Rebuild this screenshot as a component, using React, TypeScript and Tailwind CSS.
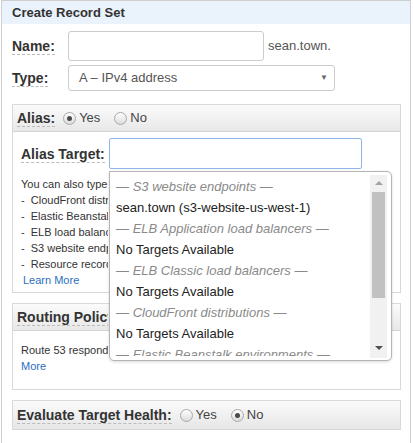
function Radio({ checked }: { checked?: boolean }) {
  return (
    <span className="flex h-[13px] w-[13px] items-center justify-center rounded-full border border-[#a9a9a9] bg-gradient-to-b from-[#ffffff] to-[#dcdcdc]">
      {checked && <span className="h-[5px] w-[5px] rounded-full bg-[#4a4a4a]" />}
    </span>
  );
}

function Label({ children }: { children: React.ReactNode }) {
  return (
    <span className="border-b border-dashed border-[#bbbbbb] text-[14px] font-bold leading-[16px] text-[#333]">
      {children}
    </span>
  );
}

const groups: { head: string; item: string }[] = [
  { head: "S3 website endpoints", item: "sean.town (s3-website-us-west-1)" },
  { head: "ELB Application load balancers", item: "No Targets Available" },
  { head: "ELB Classic load balancers", item: "No Targets Available" },
  { head: "CloudFront distributions", item: "No Targets Available" },
  { head: "Elastic Beanstalk environments", item: "No Targets Available" },
];

export default function App() {
  return (
    <div
      className="relative h-[443px] w-[413px] overflow-hidden bg-white text-[#333]"
      style={{ fontFamily: '"Liberation Sans", Arial, sans-serif' }}
    >
      <div className="ml-[1px] h-[460px] w-[410px] border-x border-t border-[#cfcfcf]">
        <div className="flex h-[23px] items-center bg-[#eaf2fc] pl-[10px] text-[13px] font-bold text-[#333]">
          Create Record Set
        </div>

        <div className="pl-[10px] pt-[7px]">
          <div className="flex h-[30px] items-center">
            <div className="w-[56px]">
              <Label>Name:</Label>
            </div>
            <div className="h-[30px] w-[196px] rounded-[3px] border border-[#cccccc] bg-white" />
            <span className="ml-[4px] text-[13px] text-[#555]">sean.town.</span>
          </div>

          <div className="mt-[4px] flex h-[26px] items-center">
            <div className="w-[56px]">
              <Label>Type:</Label>
            </div>
            <div className="flex h-[26px] w-[267px] items-center justify-between rounded-[3px] border border-[#cccccc] bg-white pl-[10px] pr-[6px] text-[13px] text-[#555]">
              <span>A – IPv4 address</span>
              <span className="text-[8px] text-[#666]">▼</span>
            </div>
          </div>

          {/* Alias panel */}
          <div className="mt-[13px] w-[389px] overflow-hidden border border-[#d9d9d9]">
            <div className="flex h-[27px] items-center border-b border-[#d4d4d4] bg-gradient-to-b from-[#fbfbfb] to-[#e8e8e8] pl-[4px] text-[13px]">
              <Label>Alias:</Label>
              <span className="ml-[8px] flex items-center gap-[3px]">
                <Radio checked />
                <span className="text-[#444]">Yes</span>
              </span>
              <span className="ml-[14px] flex items-center gap-[3px]">
                <Radio />
                <span className="text-[#444]">No</span>
              </span>
            </div>
            <div className="h-[160px] pl-[8px] pt-[6px]">
              <div className="flex h-[31px] items-center">
                <div className="w-[88px]">
                  <Label>Alias Target:</Label>
                </div>
                <div className="h-[31px] w-[253px] rounded-[2px] border border-[#8fb6e8] bg-white" />
              </div>
              {/* the rest of each line sits under the open dropdown */}
              <div className="mt-[7px] w-[87px] overflow-hidden whitespace-nowrap text-[11px] leading-[16px] text-[#333]">
                <div>You can also type the domain name</div>
                <div>-&nbsp;&nbsp;CloudFront distribution</div>
                <div>-&nbsp;&nbsp;Elastic Beanstalk</div>
                <div>-&nbsp;&nbsp;ELB load balancer</div>
                <div>-&nbsp;&nbsp;S3 website endpoint</div>
                <div>-&nbsp;&nbsp;Resource record set</div>
                <div className="pl-[2px] text-[#2a6fc0]">Learn More</div>
              </div>
            </div>
          </div>

          {/* Routing policy panel */}
          <div className="mt-[10px] w-[389px] overflow-hidden border border-[#d9d9d9]">
            <div className="flex h-[27px] items-center border-b border-[#d4d4d4] bg-gradient-to-b from-[#fbfbfb] to-[#e8e8e8] pl-[4px]">
              <div className="w-[91px] overflow-hidden whitespace-nowrap">
                <Label>Routing Policy</Label>
              </div>
            </div>
            <div className="h-[58px] w-[95px] overflow-hidden whitespace-nowrap pl-[8px] pt-[11px] text-[11px] leading-[16px]">
              <div>Route 53 responds to queries</div>
              <div className="text-[#2a6fc0]">More</div>
            </div>
          </div>

          {/* Evaluate target health */}
          <div className="mt-[10px] flex h-[30px] w-[389px] items-center border border-[#d9d9d9] bg-gradient-to-b from-[#fbfbfb] to-[#e6e6e6] pl-[4px] text-[13px]">
            <Label>Evaluate Target Health:</Label>
            <span className="ml-[8px] flex items-center gap-[3px]">
              <Radio />
              <span className="text-[#444]">Yes</span>
            </span>
            <span className="ml-[14px] flex items-center gap-[3px]">
              <Radio checked />
              <span className="text-[#444]">No</span>
            </span>
          </div>
        </div>
      </div>

      {/* Alias target dropdown */}
      <div className="absolute left-[109px] top-[171px] h-[190px] w-[283px] overflow-hidden rounded-b-[5px] rounded-tr-[5px] border border-[#b5b5b5] bg-white shadow-[0_1px_3px_rgba(0,0,0,0.15)]">
        <div className="h-[184px] overflow-hidden pl-[6px] pt-[4px] text-[13px] leading-[21px]">
          {groups.map((g) => (
            <div key={g.head}>
              <div className="italic text-[#8a8a8a]">— {g.head} —</div>
              <div className="text-[#222]">{g.item}</div>
            </div>
          ))}
        </div>
        <div className="absolute right-[4px] top-[3px] flex h-[183px] w-[17px] flex-col items-center bg-[#f1f1f1]">
          <div className="mt-[6px] h-0 w-0 border-x-[4px] border-b-[4px] border-x-transparent border-b-[#a3a3a3]" />
          <div className="mt-[7px] h-[106px] w-[13px] bg-[#c1c1c1]" />
          <div className="mt-auto mb-[8px] h-0 w-0 border-x-[4px] border-t-[4px] border-x-transparent border-t-[#505050]" />
        </div>
      </div>
    </div>
  );
}
